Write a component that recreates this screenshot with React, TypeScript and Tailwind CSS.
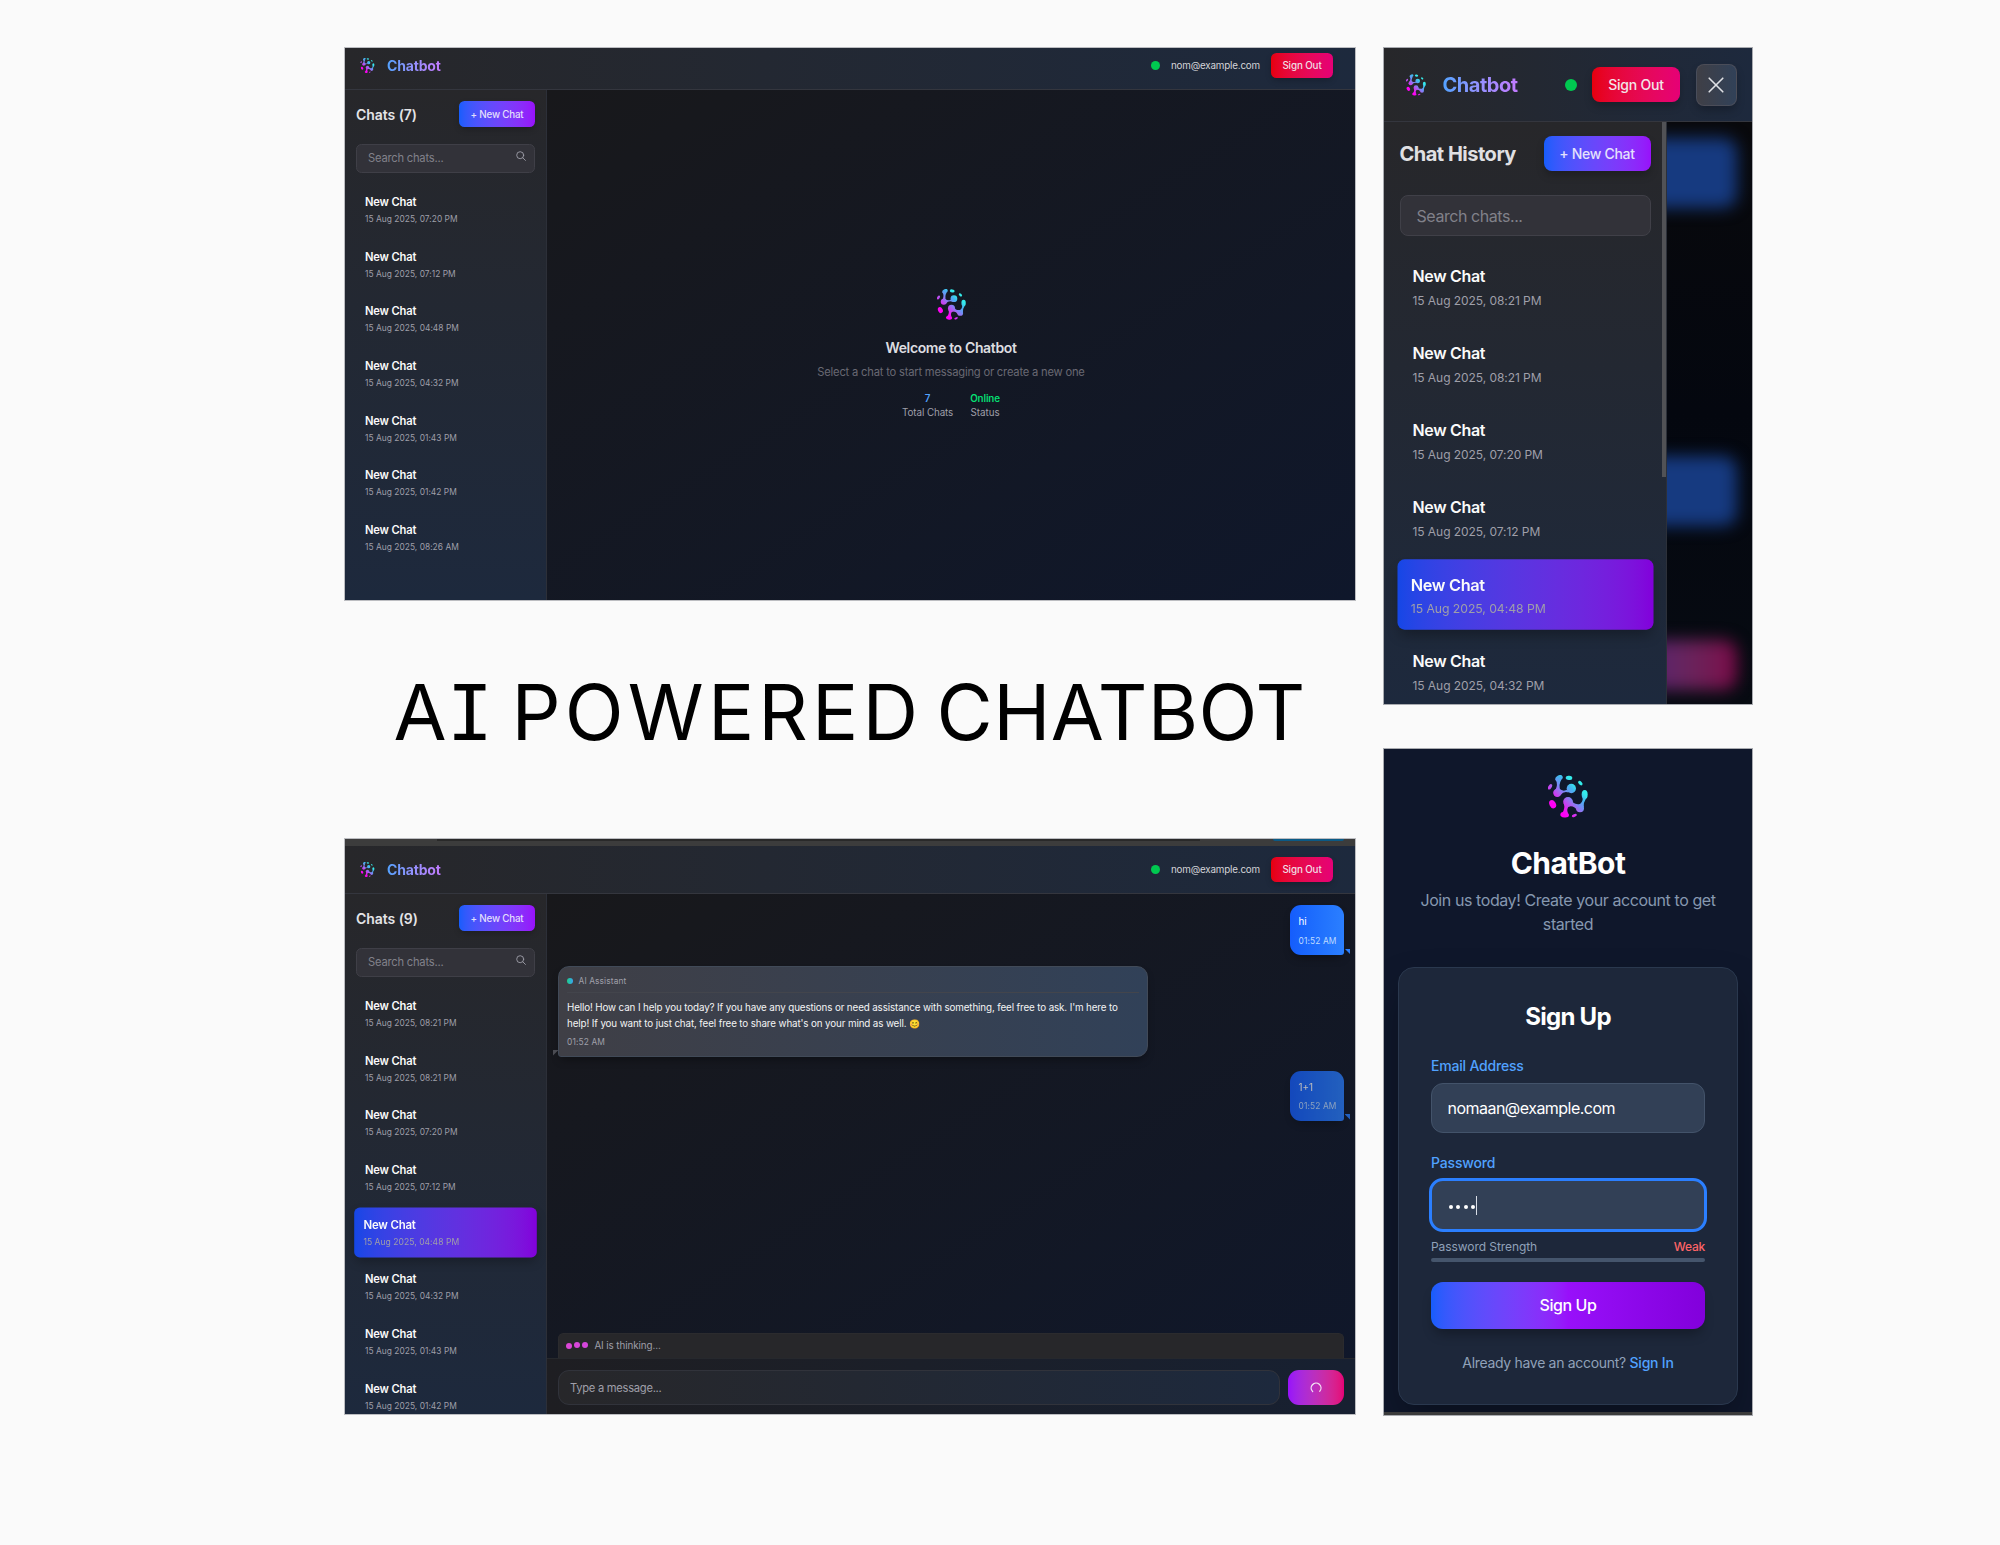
import React from 'react';

function Logo({ id, className }: { id: string; className: string }) {
  return (
    <svg viewBox="0 0 120 128" className={className} aria-hidden="true">
      <defs>
        <linearGradient id={id} gradientUnits="userSpaceOnUse" x1="20" y1="90" x2="82" y2="28">
          <stop offset="0" stopColor="#ff00f5" />
          <stop offset="0.12" stopColor="#f312f3" />
          <stop offset="0.42" stopColor="#a566ef" />
          <stop offset="0.55" stopColor="#7e84f6" />
          <stop offset="0.8" stopColor="#45b4f0" />
          <stop offset="1" stopColor="#34ecea" />
        </linearGradient>
      </defs>
      <g fill={`url(#${id})`}>
        <ellipse cx="33" cy="9" rx="12" ry="8" transform="rotate(-30 33 9)" />
        <circle cx="28" cy="53" r="12.5" />
        <circle cx="70" cy="40" r="14" />
        <path d="M23 12 Q31 28 22 45 L38 48 Q30 30 40 14 Z" />
        <path d="M34 41 Q44 50 58 44 L62 52 Q48 46 37 60 Z" />
        <ellipse cx="63" cy="8" rx="10" ry="6.5" transform="rotate(6 63 8)" />
        <ellipse cx="97" cy="24" rx="8" ry="5" transform="rotate(45 97 24)" />
        <ellipse cx="6" cy="35" rx="5" ry="9" transform="rotate(32 6 35)" />
        <ellipse cx="14" cy="87" rx="9.5" ry="13" transform="rotate(-28 14 87)" />
        <ellipse cx="110" cy="58" rx="9" ry="13.5" />
        <circle cx="96" cy="99" r="12" />
        <circle cx="60" cy="80" r="14.5" />
        <ellipse cx="50" cy="119" rx="13" ry="8" transform="rotate(6 50 119)" />
        <path d="M104 66 Q106 82 90 90 L107 97 Q106 82 115 68 Z" />
        <path d="M72 74 Q74 88 92 87 L86 104 Q78 90 62 94 Z" />
        <path d="M47 84 Q53 100 42 114 L60 114 Q54 102 64 92 Z" />
        <ellipse cx="79" cy="121" rx="8" ry="4" transform="rotate(-24 79 121)" />
      </g>
    </svg>
  );
}

function DesktopHeader({ id, className }: { id: string; className: string }) {
  return (
    <header
      className={`flex shrink-0 items-center border-b border-[#34363e] bg-linear-to-r from-[#27272a] to-[#1d293d] pl-[15px] pr-[22px] ${className}`}
    >
      <Logo id={id} className="h-[15px] w-[15px]" />
      <span className="ml-[12px] bg-linear-to-r from-[#51a2ff] to-[#c27aff] bg-clip-text text-[14px] leading-[20px] font-bold tracking-[-0.012em] text-transparent">
        Chatbot
      </span>
      <span className="ml-auto h-[9px] w-[9px] rounded-full bg-[#00c950]" />
      <span className="ml-[11px] w-[89px] text-[9.8px] leading-[14px] tracking-[-0.018em] text-[#d4d4d8]">nom@example.com</span>
      <button className="ml-[11px] h-[25px] w-[62px] rounded-[5.5px] bg-linear-to-r from-[#e7000b] to-[#e60076] text-[9.8px] leading-[14px] font-medium tracking-[-0.011em] text-[#f0dfe4] shadow-[0_3px_6px_-1px_rgba(0,0,0,0.25)]">
        Sign Out
      </button>
    </header>
  );
}

function ChatItem({ date, active }: { date: string; active?: boolean }) {
  return (
    <li
      className={`flex h-[49.17px] w-[179px] shrink-0 flex-col rounded-[5.5px] pt-[9px] pl-[9px] ${
        active ? 'scale-[1.02] bg-linear-to-r from-[#1447e6] to-[#8200db] shadow-[0_5px_10px_-2px_rgba(0,0,0,0.3)]' : ''
      }`}
    >
      <span className="text-[11.2px] leading-[16px] font-semibold tracking-[-0.015em] text-[#fafafa]">New Chat</span>
      <span className="mt-[3px] text-[8.4px] leading-[12px] tracking-[0.004em] text-[#9f9fa9]">{date}</span>
    </li>
  );
}

function DesktopSidebar({ count, chats, active }: { count: number; chats: string[]; active?: number }) {
  return (
    <aside className="flex w-[202px] shrink-0 flex-col overflow-hidden border-r border-[#2c2f38] bg-linear-to-b from-[#27272a] to-[#1d293d] pl-[11px]">
      <div className="mt-[11px] flex h-[26px] w-[179px] shrink-0 items-center justify-between">
        <h2 className="pt-[1.5px] text-[14px] leading-[20px] font-semibold tracking-[-0.004em] text-[#e4e4e7]">Chats ({count})</h2>
        <button className="h-[26px] w-[76px] rounded-[5.5px] bg-linear-to-r from-[#155dfc] to-[#9810fa] pt-px text-[9.8px] leading-[14px] font-medium tracking-[-0.02em] text-[#e2dffb] shadow-[0_3px_6px_-1px_rgba(0,0,0,0.25)]">
          + New Chat
        </button>
      </div>
      <div className="mt-[16.5px] flex h-[29.5px] w-[179px] shrink-0 items-center justify-between rounded-[5.5px] border border-[#3f3f47] bg-[#323239] pr-[8px] pl-[11px]">
        <span className="text-[11.2px] leading-[16px] tracking-[-0.019em] text-[#81818a]">Search chats...</span>
        <svg viewBox="0 0 10 10" className="mb-[4px] h-[10px] w-[10px]" fill="none" stroke="#9f9fa9" strokeWidth="0.9" strokeLinecap="round">
          <circle cx="4.2" cy="4.2" r="3.5" />
          <path d="M6.8 6.8 9.4 9.4" />
        </svg>
      </div>
      <ul className="mt-[12px] flex flex-col gap-[5.5px]">
        {chats.map((d, i) => (
          <ChatItem key={i} date={d} active={i === active} />
        ))}
      </ul>
    </aside>
  );
}

function WelcomePanel() {
  return (
    <section className="flex h-[552px] w-[1010px] flex-col overflow-hidden shadow-[0_0_0_1px_#bcbdc1]">
      <DesktopHeader id="logo-a" className="h-[42px] pb-[6px]" />
      <div className="flex min-h-0 flex-1">
        <DesktopSidebar
          count={7}
          chats={[
            '15 Aug 2025, 07:20 PM',
            '15 Aug 2025, 07:12 PM',
            '15 Aug 2025, 04:48 PM',
            '15 Aug 2025, 04:32 PM',
            '15 Aug 2025, 01:43 PM',
            '15 Aug 2025, 01:42 PM',
            '15 Aug 2025, 08:26 AM',
          ]}
        />
        <main className="flex flex-1 flex-col items-center bg-linear-to-br from-[#18181b] to-[#0f172b] pt-[199px]">
          <Logo id="logo-b" className="h-[31px] w-[29px]" />
          <h1 className="mt-[18px] text-[14px] leading-[20px] font-semibold tracking-[-0.026em] text-[#dddde0]">Welcome to Chatbot</h1>
          <p className="mt-[6px] text-[11.2px] leading-[16px] tracking-[-0.018em] text-[#696973]">
            Select a chat to start messaging or create a new one
          </p>
          <div className="mt-[11.5px] flex gap-[17px] text-center text-[9.8px] leading-[14px]">
            <div>
              <div className="font-semibold text-[#51a2ff]">7</div>
              <div className="tracking-[-0.009em] text-[#9f9fa9]">Total Chats</div>
            </div>
            <div>
              <div className="font-semibold tracking-[-0.013em] text-[#05df72]">Online</div>
              <div className="text-[#9f9fa9]">Status</div>
            </div>
          </div>
        </main>
      </div>
    </section>
  );
}

function UserBubble({ text, className }: { text: string; className: string }) {
  return (
    <div
      className={`relative ml-auto flex h-[50px] w-[54.5px] shrink-0 flex-col rounded-[11px] rounded-br-[3px] bg-linear-to-r from-[#155dfc] to-[#2b7fff] pt-[9px] pl-[9px] shadow-[0_5px_10px_-3px_rgba(0,0,0,0.4)] ${className}`}
    >
      <span className="text-[9.8px] leading-[15px] text-white">{text}</span>
      <span className="mt-[5.5px] text-[8.4px] leading-[12px] tracking-[0.015em] text-[#bedbff]">01:52 AM</span>
      <span className="absolute right-[-6px] bottom-[1px] h-[5.5px] w-[5.5px] bg-[#2b7fff] [clip-path:polygon(0_0,100%_0,100%_100%)]" />
    </div>
  );
}

function ConversationPanel() {
  return (
    <section className="flex h-[575px] w-[1010px] flex-col overflow-hidden shadow-[0_0_0_1px_#bcbdc1]">
      <div className="flex h-[7px] shrink-0 items-start bg-[#3c3c3c]">
        <div className="ml-[92px] h-[1.5px] w-[763px] bg-[#292929]" />
        <div className="ml-[73px] h-[2px] w-[71px] rounded-b-[2px] bg-[#0b5a86]" />
      </div>
      <DesktopHeader id="logo-c" className="h-[48px]" />
      <div className="flex min-h-0 flex-1">
        <DesktopSidebar
          count={9}
          active={4}
          chats={[
            '15 Aug 2025, 08:21 PM',
            '15 Aug 2025, 08:21 PM',
            '15 Aug 2025, 07:20 PM',
            '15 Aug 2025, 07:12 PM',
            '15 Aug 2025, 04:48 PM',
            '15 Aug 2025, 04:32 PM',
            '15 Aug 2025, 01:43 PM',
            '15 Aug 2025, 01:42 PM',
          ]}
        />
        <main className="flex flex-1 flex-col bg-linear-to-br from-[#18181b] to-[#0f172b]">
          <div className="flex min-h-0 flex-1 flex-col px-[11px] pt-[11px]">
            <UserBubble text="hi" className="" />
            <div className="relative mt-[11px] flex h-[90.5px] w-[590px] shrink-0 flex-col rounded-[11px] rounded-bl-[3px] border border-[#414a58] bg-linear-to-r from-[#3f3f46] to-[#314158] pl-[8px] shadow-[0_5px_10px_-3px_rgba(0,0,0,0.4)]">
              <div className="mr-[8px] flex h-[25.5px] items-center border-b border-[#43454c] pt-[4px]">
                <span className="h-[6px] w-[6px] rounded-full bg-linear-to-r from-[#1fce84] to-[#3da0f0]" />
                <span className="ml-[5.5px] text-[8.4px] leading-[12px] tracking-[0.012em] text-[#9f9fa9]">AI Assistant</span>
              </div>
              <p className="mt-[7px] text-[9.8px] leading-[16px] tracking-[-0.0122em] whitespace-nowrap text-[#f4f4f5]">
                Hello! How can I help you today? If you have any questions or need assistance with something, feel free to ask. I'm here to
                <br />
                help! If you want to just chat, feel free to share what's on your mind as well. <span className="text-[9px]">😊</span>
              </p>
              <span className="mt-[4.5px] text-[8.4px] leading-[12px] tracking-[0.015em] text-[#9f9fa9]">01:52 AM</span>
              <span className="absolute bottom-0 left-[-6px] h-[5.5px] w-[5.5px] bg-[#4b4c53] [clip-path:polygon(0_0,100%_0,0_100%)]" />
            </div>
            <UserBubble text="1+1" className="mt-[14px] opacity-70" />
            <div className="mt-auto flex h-[25px] shrink-0 items-center rounded-t-[5.5px] border border-b-0 border-[#2b2b2e] bg-[#27272a] pl-[7px]">
              <span className="flex gap-[2.2px]">
                <i className="h-[6px] w-[6px] rounded-full bg-[#db46d6]" />
                <i className="h-[6px] w-[6px] -translate-y-px rounded-full bg-[#d846d9]" />
                <i className="h-[6px] w-[6px] -translate-y-px rounded-full bg-[#d546dc]" />
              </span>
              <span className="ml-[6px] text-[9.8px] leading-[14px] tracking-[-0.008em] text-[#9f9fa9]">AI is thinking...</span>
            </div>
          </div>
          <div className="flex h-[56px] shrink-0 items-start justify-between border-t border-[#26282d] bg-linear-to-r from-[#1e1e22] to-[#172031] px-[11px] pt-[11px]">
            <div className="flex h-[35px] w-[722px] items-center rounded-[11px] border border-[#31333b] bg-linear-to-r from-[#27272a] to-[#1d293d] pl-[11px] text-[11.2px] leading-[16px] tracking-[-0.025em] text-[#9f9fa9]">
              Type a message...
            </div>
            <div className="flex h-[35px] w-[56px] items-center justify-center rounded-[11px] bg-linear-to-r from-[#9810fa] to-[#e60076]">
              <svg viewBox="0 0 12 12" className="h-[12px] w-[12px]" fill="none" stroke="#f4e4f4" strokeWidth="1.3" strokeLinecap="round">
                <path d="M2.7 9.6A4.9 4.9 0 1 1 9.8 9.2" />
              </svg>
            </div>
          </div>
        </main>
      </div>
    </section>
  );
}

function MobileItem({ date, active }: { date: string; active?: boolean }) {
  return (
    <li
      className={`flex h-[68.5px] w-[251px] shrink-0 flex-col rounded-[7px] pt-[12.5px] pl-[13px] ${
        active ? 'scale-[1.02] bg-linear-to-r from-[#1447e6] to-[#8200db] shadow-[0_8px_12px_-3px_rgba(0,0,0,0.3)]' : ''
      }`}
    >
      <span className="text-[16px] leading-[24px] font-semibold tracking-[-0.021em] text-[#fafafa]">New Chat</span>
      <span className="mt-[4.5px] text-[12px] leading-[16px] tracking-[-0.005em] text-[#9f9fa9]">{date}</span>
    </li>
  );
}

function MobilePanel() {
  return (
    <section className="flex h-[656px] w-[368px] flex-col overflow-hidden shadow-[0_0_0_1px_#a9abb0]">
      <header className="flex h-[74px] shrink-0 items-center border-b border-[#34363e] bg-linear-to-r from-[#27272a] to-[#1d293d] pr-[15.5px] pl-[22px]">
        <Logo id="logo-d" className="h-[22px] w-[20px]" />
        <span className="ml-[16.5px] bg-linear-to-r from-[#51a2ff] to-[#c27aff] bg-clip-text text-[20px] leading-[28px] font-bold tracking-[-0.024em] text-transparent">
          Chatbot
        </span>
        <span className="ml-auto h-[12px] w-[12px] rounded-full bg-[#00c950]" />
        <button className="ml-[15.5px] h-[35px] w-[88px] rounded-[8px] bg-linear-to-r from-[#e7000b] to-[#e60076] text-[14px] leading-[20px] font-medium tracking-[-0.016em] text-[#f3e4e8] shadow-[0_5px_8px_-1px_rgba(0,0,0,0.25)]">
          Sign Out
        </button>
        <div className="ml-[15.5px] flex h-[42px] w-[41px] items-center justify-center rounded-[8px] border border-[#52525c]/70 bg-linear-to-r from-[#3f3f46] to-[#314158] shadow-[0_5px_8px_-1px_rgba(0,0,0,0.25)]">
          <svg viewBox="0 0 16 16" className="h-[16px] w-[16px]" fill="none" stroke="#dfe1e5" strokeWidth="1.6" strokeLinecap="round">
            <path d="M1.2 1.2 14.8 14.8M14.8 1.2 1.2 14.8" />
          </svg>
        </div>
      </header>
      <div className="flex min-h-0 flex-1">
        <aside className="relative flex w-[283px] shrink-0 flex-col overflow-hidden border-r border-[#2c3039] bg-linear-to-b from-[#27272a] to-[#1d293d] pl-[15.5px]">
          <div className="mt-[14px] flex h-[35px] w-[251px] shrink-0 items-center justify-between">
            <h2 className="text-[20px] leading-[28px] font-bold tracking-[-0.025em] text-[#e0e0e3]">Chat History</h2>
            <button className="h-[35px] w-[107px] rounded-[8px] bg-linear-to-r from-[#155dfc] to-[#9810fa] text-[14px] leading-[20px] font-medium tracking-[-0.021em] text-[#e4e1fc] shadow-[0_5px_8px_-1px_rgba(0,0,0,0.25)]">
              + New Chat
            </button>
          </div>
          <div className="mt-[24px] flex h-[41px] w-[251px] shrink-0 items-center rounded-[8px] border border-[#404048] bg-[#323239] pl-[16px] text-[16px] leading-[24px] tracking-[-0.027em] text-[#81818a]">
            Search chats...
          </div>
          <ul className="mt-[15.5px] flex flex-col gap-[8.5px]">
            <MobileItem date="15 Aug 2025, 08:21 PM" />
            <MobileItem date="15 Aug 2025, 08:21 PM" />
            <MobileItem date="15 Aug 2025, 07:20 PM" />
            <MobileItem date="15 Aug 2025, 07:12 PM" />
            <MobileItem date="15 Aug 2025, 04:48 PM" active />
            <MobileItem date="15 Aug 2025, 04:32 PM" />
          </ul>
          <div className="absolute top-0 right-0 h-[355px] w-[4.5px] bg-[#515256]" />
        </aside>
        <div className="flex flex-1 flex-col overflow-hidden bg-linear-to-b from-[#09090c] via-[#04070f] to-[#070b12]">
          <div className="mt-[16px] -ml-[40px] h-[70px] w-[110px] shrink-0 rounded-[14px] bg-[#163a80] blur-[8px]" />
          <div className="mt-[248px] -ml-[40px] h-[70px] w-[110px] shrink-0 rounded-[14px] bg-[#163a80] blur-[8px]" />
          <div className="mt-[114px] -ml-[40px] h-[50px] w-[110px] shrink-0 rounded-[14px] bg-linear-to-r from-[#4c1a78] via-[#66255f] to-[#7c0748] blur-[8px]" />
        </div>
      </div>
    </section>
  );
}

function SignUpPanel() {
  return (
    <section className="flex h-[666px] w-[368px] flex-col overflow-hidden bg-[#0f172b] shadow-[0_0_0_1px_#a9abb0]">
      <div className="flex flex-1 flex-col items-center">
        <Logo id="logo-e" className="mt-[26px] h-[43px] w-[40px]" />
        <h1 className="mt-[26.5px] text-[30px] leading-[36px] font-bold tracking-[-0.019em] text-white">ChatBot</h1>
        <p className="mt-[7.5px] text-center text-[16px] leading-[24px] tracking-[-0.0265em] text-[#8698b0]">
          Join us today! Create your account to get
          <br />
          started
        </p>
        <div className="mt-[31px] flex h-[438px] w-[340px] flex-col rounded-[16px] border border-[#2a384e] bg-[#1d273a] px-[32px] shadow-[0_20px_40px_-6px_rgba(0,0,0,0.35)]">
          <h2 className="mt-[33px] text-center text-[24px] leading-[32px] font-bold tracking-[-0.03em] text-white">Sign Up</h2>
          <label className="mt-[23px] text-[14px] leading-[20px] font-medium tracking-[-0.014em] text-[#51a2ff]">Email Address</label>
          <div className="mt-[7px] flex h-[49.5px] items-center rounded-[12px] border border-[#43536a] bg-[#324056] pt-px pl-[15.5px] text-[16px] leading-[24px] tracking-[-0.033em] text-white">
            nomaan@example.com
          </div>
          <label className="mt-[20.5px] text-[14px] leading-[20px] font-medium tracking-[-0.012em] text-[#51a2ff]">Password</label>
          <div className="-mx-[2px] mt-[5px] flex h-[54px] items-center rounded-[14px] border-[3px] border-[#2b7fff] bg-[#324056] pl-[17px]">
            <div className="mt-[4px] flex gap-[3.4px]">
              <i className="h-[4px] w-[4px] rounded-full bg-white" />
              <i className="h-[4px] w-[4px] rounded-full bg-white" />
              <i className="h-[4px] w-[4px] rounded-full bg-white" />
              <i className="h-[4px] w-[4px] rounded-full bg-white" />
            </div>
            <div className="ml-[0.5px] h-[19px] w-px bg-[#d8dde6]" />
          </div>
          <div className="mt-[7px] flex justify-between text-[12px] leading-[16px]">
            <span className="tracking-[-0.006em] text-[#90a1b9]">Password Strength</span>
            <span className="font-medium tracking-[-0.02em] text-[#ff6467]">Weak</span>
          </div>
          <div className="mt-[2.5px] h-[4px] shrink-0 rounded-full bg-[#45556c]" />
          <button className="mt-[20px] h-[47.5px] shrink-0 rounded-[12px] bg-linear-to-r from-[#155dfc] via-[#9810fa] to-[#8200db] text-[16px] leading-[24px] font-medium tracking-[-0.026em] text-white shadow-[0_8px_12px_-3px_rgba(0,0,0,0.3)]">
            Sign Up
          </button>
          <p className="mt-[24px] text-center text-[14px] leading-[20px] tracking-[-0.022em] text-[#90a1b9]">
            Already have an account? <span className="font-medium tracking-[-0.0145em] text-[#51a2ff]">Sign In</span>
          </p>
        </div>
      </div>
      <div className="h-[3.5px] shrink-0 bg-[#3b3b3b]" />
    </section>
  );
}

export default function App() {
  return (
    <div className="flex h-[1545px] w-[2000px] items-start gap-[29px] overflow-hidden bg-[#fafafa] pt-[48px] pl-[345px] font-['Inter',sans-serif] antialiased">
      <div className="flex flex-col">
        <WelcomePanel />
        <h1 className="flex h-[239px] pt-[67px] pl-[48.5px] text-[77px] leading-[90px] whitespace-nowrap text-black">
          <span className="w-[118px]">
            A<span className="font-['DejaVu_Sans_Mono']">I</span>
          </span>{' '}
          <span className="w-[425px] tracking-[0.054em]">POWERED</span> <span className="tracking-[0.005em]">CHATBOT</span>
        </h1>
        <ConversationPanel />
      </div>
      <div className="flex flex-col gap-[45px]">
        <MobilePanel />
        <SignUpPanel />
      </div>
    </div>
  );
}
